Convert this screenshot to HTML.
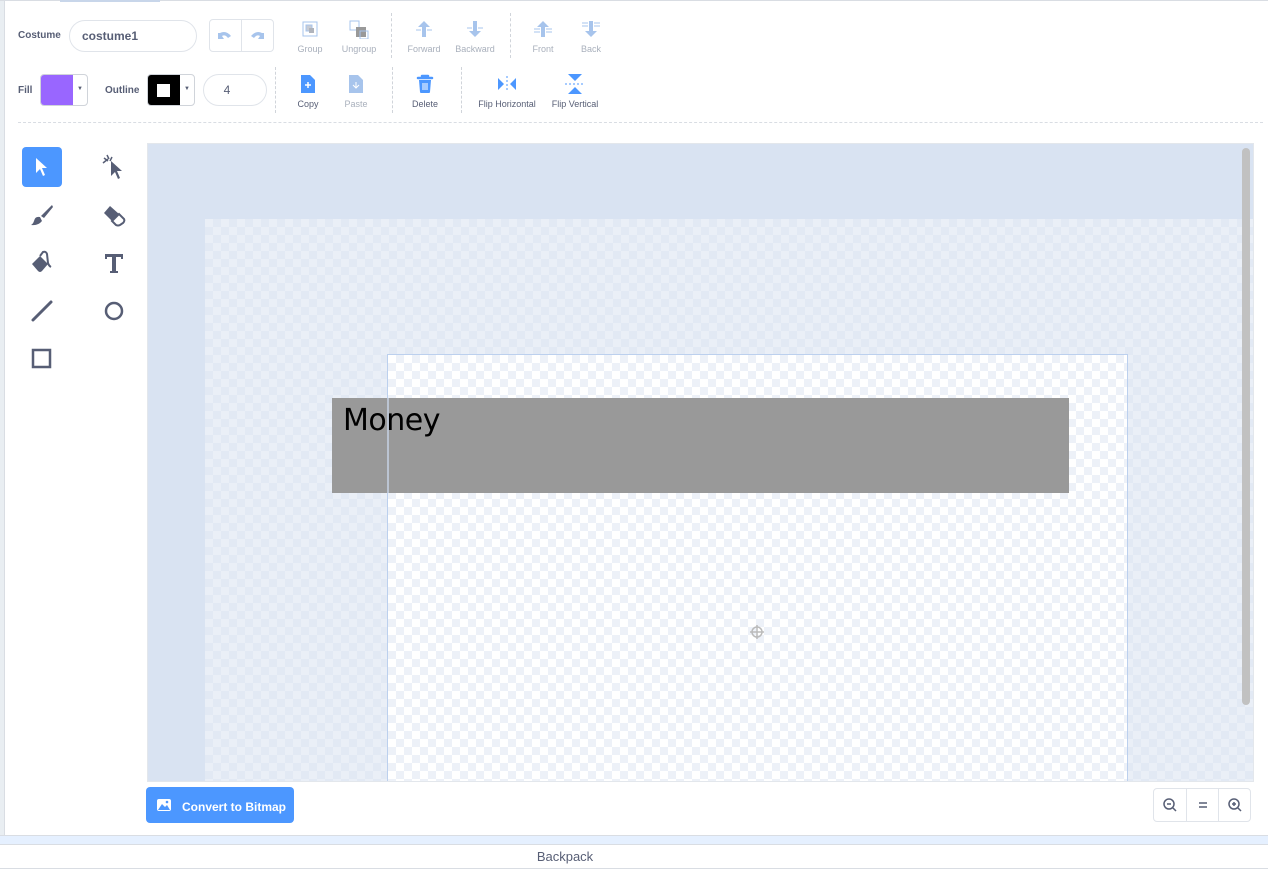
<!DOCTYPE html>
<html><head><meta charset="utf-8"><style>
*{box-sizing:border-box;margin:0;padding:0}
body{width:1268px;height:869px;position:relative;background:#fff;font-family:"Liberation Sans",sans-serif;overflow:hidden;color:#575e75}
.abs{position:absolute}
.lbl{font-size:9px;color:#575e75;text-align:center;position:absolute;white-space:nowrap}
.dis{color:#a9b0bc}
.vd{position:absolute;width:0;border-left:1px dashed #d0d4da}
.chk{background-color:#eaeff7;background-image:repeating-conic-gradient(#e2e9f4 0 25%,transparent 0 50%);background-size:16px 16px}
.chk2{background-color:#fff;background-image:repeating-conic-gradient(#edf1f8 0 25%,transparent 0 50%);background-size:16px 16px}
</style></head><body>
<div class="abs" style="left:0;top:0;width:5px;height:836px;background:#e9eef2;border-right:1px solid #d9dde3"></div>
<div class="abs" style="left:0;top:0;width:1268px;height:1px;background:#d9dde3"></div>
<div class="abs" style="left:60px;top:0;width:100px;height:2px;background:#c8d6ea"></div>

<div class="abs" style="left:18px;top:30px;font-size:10px;font-weight:bold">Costume</div>
<div class="abs" style="left:69px;top:20px;width:128px;height:32px;border:1px solid #e0e4ea;border-radius:16px;font-size:12px;font-weight:bold;padding:8px 12px">costume1</div>
<div class="abs" style="left:209px;top:19px;width:65px;height:33px;border:1px solid #e0e4ea;border-radius:4px"></div>
<div class="abs" style="left:241px;top:19px;width:1px;height:33px;background:#e0e4ea"></div>
<svg class="abs" style="left:217px;top:29px" width="16" height="12"><path d="M3 4 Q9 1 14 7 L11 9 Q8 5 5 7 L7 10 L1 10 L1 4Z" fill="#a7c4ec"/></svg>
<svg class="abs" style="left:249px;top:29px" width="16" height="12"><path d="M13 4 Q7 1 2 7 L5 9 Q8 5 11 7 L9 10 L15 10 L15 4Z" fill="#a7c4ec"/></svg>

<svg class="abs" style="left:300px;top:19px" width="20" height="20"><rect x="3" y="3" width="14" height="14" fill="none" stroke="#a7c4ec"/><rect x="6" y="6" width="6" height="6" fill="#c8ccd4" stroke="#a7c4ec"/><rect x="9" y="9" width="5" height="5" fill="#b0b4bc"/></svg>
<div class="lbl dis" style="left:290px;top:44px;width:40px">Group</div>
<svg class="abs" style="left:348px;top:19px" width="22" height="20"><rect x="2" y="2" width="9" height="9" fill="none" stroke="#a7c4ec"/><rect x="8" y="8" width="10" height="10" fill="#999"/><rect x="12" y="12" width="8" height="8" fill="none" stroke="#a7c4ec"/></svg>
<div class="lbl dis" style="left:336px;top:44px;width:46px">Ungroup</div>
<div class="vd" style="left:391px;top:13px;height:45px"></div>
<svg class="abs" style="left:414px;top:20px" width="20" height="18"><path d="M10 1 L16 7 H12 V17 H8 V7 H4Z" fill="#a7c4ec"/><path d="M2 10 H7 M13 10 H18" stroke="#a7c4ec"/></svg>
<div class="lbl dis" style="left:402px;top:44px;width:44px">Forward</div>
<svg class="abs" style="left:465px;top:20px" width="20" height="18"><path d="M10 17 L16 11 H12 V1 H8 V11 H4Z" fill="#a7c4ec"/><path d="M2 8 H7 M13 8 H18" stroke="#a7c4ec"/></svg>
<div class="lbl dis" style="left:450px;top:44px;width:50px">Backward</div>
<div class="vd" style="left:510px;top:13px;height:45px"></div>
<svg class="abs" style="left:533px;top:20px" width="20" height="18"><path d="M10 1 L16 7 H12 V17 H8 V7 H4Z" fill="#a7c4ec"/><path d="M1 9 H7 M1 12 H7 M13 9 H19 M13 12 H19" stroke="#a7c4ec"/></svg>
<div class="lbl dis" style="left:523px;top:44px;width:40px">Front</div>
<svg class="abs" style="left:581px;top:20px" width="20" height="18"><path d="M10 17 L16 11 H12 V1 H8 V11 H4Z" fill="#a7c4ec"/><path d="M1 3 H7 M1 6 H7 M13 3 H19 M13 6 H19" stroke="#a7c4ec"/></svg>
<div class="lbl dis" style="left:571px;top:44px;width:40px">Back</div>

<div class="abs" style="left:18px;top:85px;font-size:10px;font-weight:bold">Fill</div>
<div class="abs" style="left:40px;top:74px;width:48px;height:32px;border:1px solid #d0d4da;border-radius:4px;overflow:hidden"><div style="width:32px;height:100%;background:#9966ff"></div></div>
<div class="abs" style="left:77px;top:86px;font-size:6px">▼</div>
<div class="abs" style="left:105px;top:85px;font-size:10px;font-weight:bold">Outline</div>
<div class="abs" style="left:147px;top:74px;width:48px;height:32px;border:1px solid #d0d4da;border-radius:4px;overflow:hidden"><div style="width:32px;height:100%;background:#000;position:relative"><div style="position:absolute;left:9px;top:9px;width:13px;height:13px;background:#fff"></div></div></div>
<div class="abs" style="left:184px;top:86px;font-size:6px">▼</div>
<div class="abs" style="left:203px;top:74px;width:64px;height:32px;border:1px solid #e0e4ea;border-radius:16px;font-size:12px;text-align:center;line-height:30px;padding-right:16px">4</div>
<div class="vd" style="left:275px;top:67px;height:46px"></div>
<svg class="abs" style="left:300px;top:74px" width="16" height="20"><path d="M1 1 H10 L15 6 V19 H1Z" fill="#4c97ff"/><path d="M8 8 V14 M5 11 H11" stroke="#fff" stroke-width="1.5"/></svg>
<div class="lbl" style="left:288px;top:99px;width:40px">Copy</div>
<svg class="abs" style="left:348px;top:74px" width="16" height="20"><path d="M1 1 H10 L15 6 V19 H1Z" fill="#a7c4ec"/><path d="M8 8 V14 M5 11 L8 14 L11 11" stroke="#fff" fill="none"/></svg>
<div class="lbl dis" style="left:336px;top:99px;width:40px">Paste</div>
<div class="vd" style="left:392px;top:67px;height:46px"></div>
<svg class="abs" style="left:416px;top:74px" width="18" height="20"><path d="M6 2 H12 M2 4 H16" stroke="#4c97ff" stroke-width="2.5" stroke-linecap="round"/><path d="M3 6 H15 L14 18 Q14 19 13 19 H5 Q4 19 4 18Z" fill="#4c97ff"/><path d="M7 9 V16 M9 9 V16 M11 9 V16" stroke="#fff"/></svg>
<div class="lbl" style="left:405px;top:99px;width:40px">Delete</div>
<div class="vd" style="left:461px;top:67px;height:46px"></div>
<svg class="abs" style="left:496px;top:74px" width="22" height="20"><path d="M2 4 L8 10 L2 16Z M20 4 L14 10 L20 16Z" fill="#4c97ff"/><path d="M11 2 V18" stroke="#4c97ff" stroke-dasharray="2 2"/></svg>
<div class="lbl" style="left:472px;top:99px;width:70px">Flip Horizontal</div>
<svg class="abs" style="left:564px;top:73px" width="22" height="22"><path d="M4 1 H18 L11 8Z M4 21 H18 L11 14Z" fill="#4c97ff"/><path d="M1 11 H21" stroke="#4c97ff" stroke-dasharray="2 2"/></svg>
<div class="lbl" style="left:545px;top:99px;width:60px">Flip Vertical</div>
<div class="abs" style="left:18px;top:122px;width:1245px;border-top:1px dashed #d9dde3"></div>

<div class="abs" style="left:22px;top:147px;width:40px;height:40px;background:#4c97ff;border-radius:4px"></div>
<svg class="abs" style="left:33px;top:156px" width="18" height="22"><path d="M3 2 V17 L7 13 L10 20 L12 19 L9 12 L14 12Z" fill="#fff"/></svg>
<svg class="abs" style="left:100px;top:153px" width="28" height="28"><path d="M11 8 V23 L15 19 L18 26 L20 25 L17 18 L22 18Z" fill="#575e75"/><path d="M3 10 L8 6 M7 2 L9 6 M4 5 L8 8 M12 4 L10 8" stroke="#575e75" stroke-width="1.5"/></svg>
<svg class="abs" style="left:28px;top:202px" width="28" height="26"><path d="M24 3 L13 14 L16 16 L25 5Z" fill="#575e75"/><path d="M12 15 Q7 14 6 19 Q5 22 3 23 Q10 24 14 19Z" fill="#575e75"/></svg>
<svg class="abs" style="left:100px;top:202px" width="28" height="26"><path d="M10 4 L4 11 L12 19 L19 12Z" fill="#575e75"/><path d="M12 19 L19 12 L24 17 Q25 19 23 21 L20 23 Q18 24 16 23Z" fill="#fff" stroke="#575e75" stroke-width="2"/></svg>
<svg class="abs" style="left:28px;top:250px" width="28" height="26"><path d="M4 14 L12 6 L20 14 L14 21 Q12 23 10 21Z" fill="#575e75"/><path d="M12 6 L15 2 Q18 1 19 4 L20 13 Q21 16 23 17" stroke="#575e75" stroke-width="2" fill="none"/></svg>
<svg class="abs" style="left:100px;top:250px" width="28" height="26"><path d="M5 4 H23 V9 H21 V7 H16 V21 H18 V23 H10 V21 H12 V7 H7 V9 H5Z" fill="#575e75"/></svg>
<svg class="abs" style="left:28px;top:298px" width="28" height="26"><path d="M5 22 L23 4" stroke="#575e75" stroke-width="3" stroke-linecap="round"/></svg>
<svg class="abs" style="left:100px;top:298px" width="28" height="26"><circle cx="14" cy="13" r="8" fill="none" stroke="#575e75" stroke-width="2.5"/></svg>
<svg class="abs" style="left:28px;top:346px" width="28" height="26"><rect x="5" y="4" width="17" height="17" fill="none" stroke="#575e75" stroke-width="2.5"/></svg>

<div class="abs" style="left:147px;top:143px;width:1107px;height:639px;border:1px solid #e3e7ec;background:#d9e3f2;overflow:hidden">
  <div class="abs chk" style="left:57px;top:75px;width:1060px;height:600px"></div>
  <div class="abs chk2" style="left:239px;top:210px;width:741px;height:440px;border:1px solid #bcd0ee"></div>
  <div class="abs" style="left:184px;top:254px;width:737px;height:95px;background:#999"></div>
  <div class="abs" style="left:239px;top:254px;width:2px;height:95px;background:#c9d6ea;opacity:.7"></div>
  <div class="abs" style="left:195px;top:259px;font-size:30px;font-family:'DejaVu Sans',sans-serif;color:#000;letter-spacing:-0.5px">Money</div>
  <svg class="abs" style="left:601px;top:480px" width="16" height="16"><circle cx="8" cy="8" r="5" fill="none" stroke="#bbb" stroke-width="1.5"/><path d="M8 1 V15 M1 8 H15" stroke="#bbb" stroke-width="1.5"/></svg>
  <div class="abs" style="left:1094px;top:4px;width:8px;height:557px;background:#c1c1c1;border-radius:4px"></div>
</div>

<div class="abs" style="left:146px;top:787px;width:148px;height:36px;background:#4c97ff;border-radius:4px;color:#fff;font-size:12px;font-weight:bold;padding:13px 0 0 36px">Convert to Bitmap</div>
<svg class="abs" style="left:156px;top:797px" width="16" height="16"><rect x="1" y="2" width="14" height="12" rx="2" fill="#fff"/><path d="M2 13 L6 7 L9 10 L11 8 L14 13Z" fill="#4c97ff"/><circle cx="11" cy="5" r="1.3" fill="#4c97ff"/></svg>

<div class="abs" style="left:1153px;top:788px;width:98px;height:34px;border:1px solid #e0e4ea;border-radius:4px"></div>
<div class="abs" style="left:1186px;top:788px;width:1px;height:34px;background:#e0e4ea"></div>
<div class="abs" style="left:1218px;top:788px;width:1px;height:34px;background:#e0e4ea"></div>
<svg class="abs" style="left:1162px;top:797px" width="16" height="16"><circle cx="7" cy="7" r="5" fill="none" stroke="#575e75" stroke-width="1.5"/><path d="M5 7 H9 M11 11 L14 14" stroke="#575e75" stroke-width="1.5"/></svg>
<svg class="abs" style="left:1195px;top:797px" width="16" height="16"><path d="M4 6 H12 M4 10 H12" stroke="#575e75" stroke-width="1.5"/></svg>
<svg class="abs" style="left:1227px;top:797px" width="16" height="16"><circle cx="7" cy="7" r="5" fill="none" stroke="#575e75" stroke-width="1.5"/><path d="M5 7 H9 M7 5 V9 M11 11 L14 14" stroke="#575e75" stroke-width="1.5"/></svg>

<div class="abs" style="left:0;top:835px;width:1268px;height:10px;background:#e5f0ff;border-top:1px solid #d9dde3;border-bottom:1px solid #d9dde3"></div>
<div class="abs" style="left:0;top:849px;width:1268px;text-align:center;font-size:13px;color:#575e75;padding-right:138px">Backpack</div>
<div class="abs" style="left:0;top:868px;width:1268px;height:1px;background:#d9dde3"></div>
</body></html>
